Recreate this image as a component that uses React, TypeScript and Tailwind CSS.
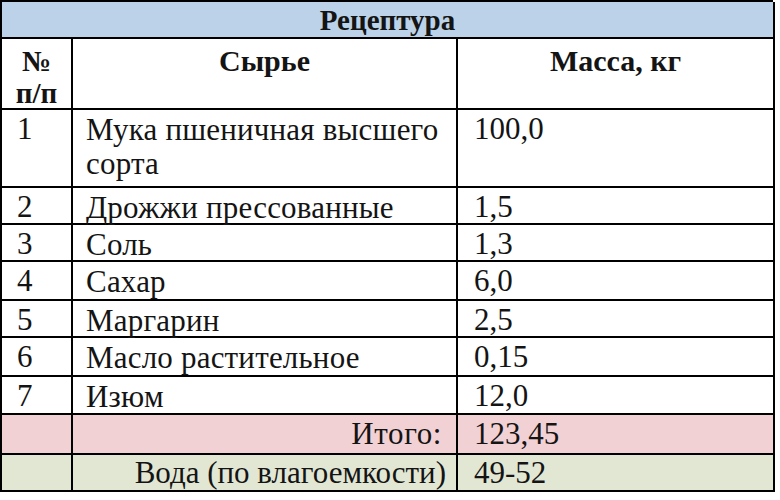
import React from 'react';

// ─── Data ────────────────────────────────────────────────────────────────────

type Row = { n: string; name: string[]; mass: string; h: string };

const rows: Row[] = [
  { n: '1', name: ['Мука пшеничная высшего', 'сорта'], mass: '100,0', h: 'h-[78px]' },
  { n: '2', name: ['Дрожжи прессованные'], mass: '1,5', h: 'h-[37px]' },
  { n: '3', name: ['Соль'], mass: '1,3', h: 'h-[37px]' },
  { n: '4', name: ['Сахар'], mass: '6,0', h: 'h-[39px]' },
  { n: '5', name: ['Маргарин'], mass: '2,5', h: 'h-[37px]' },
  { n: '6', name: ['Масло растительное'], mass: '0,15', h: 'h-[39px]' },
  { n: '7', name: ['Изюм'], mass: '12,0', h: 'h-[38px]' },
];

const cell = 'border-r-2 border-b-2 border-black';

// ─── Component ───────────────────────────────────────────────────────────────

export default function App() {
  return (
    <div className="w-[780px] h-[500px] bg-white text-[#141414] font-['Liberation_Serif',serif]">
      <div className="w-[773px] grid grid-cols-[71px_385px_317px] border-l-2 border-t-2 border-black text-[31px] leading-[32px]">
        {/* Title */}
        <div className={`${cell} col-span-3 h-[37px] pt-[3px] bg-[#bbd2e8] text-center font-bold text-[29px] leading-[31px]`}>
          Рецептура
        </div>

        {/* Header */}
        <div className={`${cell} h-[71px] pt-[6px] flex flex-col items-center font-bold text-[29px] leading-[32px]`}>
          <span>№</span>
          <span>п/п</span>
        </div>
        <div className={`${cell} h-[71px] pt-[6px] text-center font-bold text-[30px] leading-[32px]`}>Сырье</div>
        <div className={`${cell} h-[71px] pt-[6px] text-center font-bold text-[30px] leading-[32px]`}>Масса, кг</div>

        {/* Body */}
        {rows.map((r) => (
          <React.Fragment key={r.n}>
            <div className={`${cell} ${r.h} pl-[15px] pt-[3px]`}>{r.n}</div>
            <div className={`${cell} ${r.h} pl-[13px] pt-[3px] tracking-[0.2px] leading-[34px] flex flex-col`}>
              {r.name.map((line) => (
                <span key={line}>{line}</span>
              ))}
            </div>
            <div className={`${cell} ${r.h} pl-[16px] pt-[3px]`}>{r.mass}</div>
          </React.Fragment>
        ))}

        {/* Totals */}
        <div className={`${cell} h-[40px] bg-[#f2d1d4]`} />
        <div className={`${cell} h-[40px] bg-[#f2d1d4] pr-[14px] pt-[3px] tracking-[0.6px] text-right`}>Итого:</div>
        <div className={`${cell} h-[40px] bg-[#f2d1d4] pl-[16px] pt-[3px]`}>123,45</div>

        <div className={`${cell} h-[37px] bg-[#e2e7d4]`} />
        <div className={`${cell} h-[37px] bg-[#e2e7d4] pr-[10px] pt-[2px] text-right`}>
          Вода (по влагоемкости)
        </div>
        <div className={`${cell} h-[37px] bg-[#e2e7d4] pl-[16px] pt-[2px]`}>49-52</div>
      </div>
    </div>
  );
}
